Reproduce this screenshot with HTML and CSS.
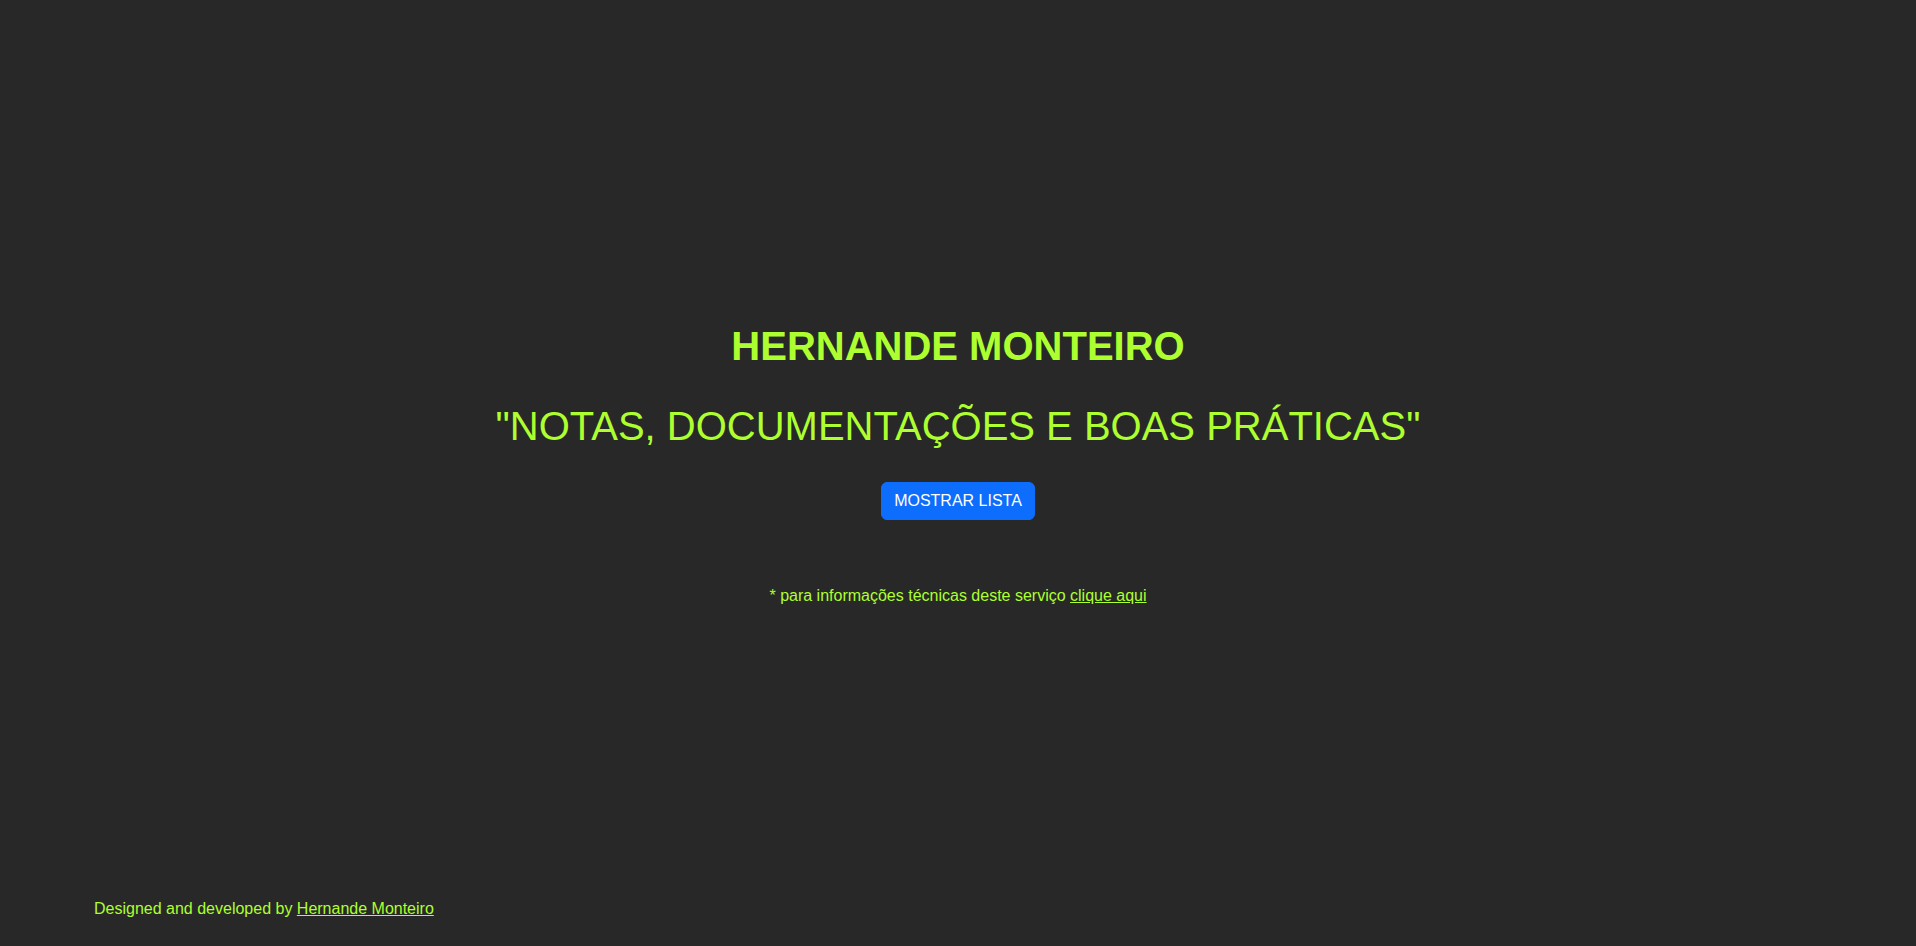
FILE: index.html
```html
<!DOCTYPE html>
<html lang="pt">
<head>
<meta charset="utf-8">
<title>Hernande Monteiro</title>
<link rel="stylesheet" href="styles.css">
</head>
<body>
<div class="page">
  <main class="hero">
    <h1 class="title">HERNANDE MONTEIRO</h1>
    <h2 class="subtitle">"NOTAS, DOCUMENTAÇÕES E BOAS PRÁTICAS"</h2>
    <button class="btn" type="button">MOSTRAR LISTA</button>
    <p class="note">* para informações técnicas deste serviço <a href="#">clique aqui</a></p>
  </main>
  <footer class="footer">
    <p>Designed and developed by <a href="#">Hernande Monteiro</a></p>
  </footer>
</div>
</body>
</html>
```
FILE: styles.css
```css
html, body {
  margin: 0;
  padding: 0;
}
body {
  background: #282828;
  color: #adff2f;
  font-family: "Liberation Sans", Arial, sans-serif;
  font-size: 16px;
  line-height: 1.5;
}
.page {
  min-height: 100vh;
  display: flex;
  flex-direction: column;
}
.hero {
  display: flex;
  flex-direction: column;
  align-items: center;
  padding-top: 323px;
}
.title {
  margin: 0;
  font-size: 40px;
  font-weight: 700;
  line-height: 46px;
}
.subtitle {
  margin: 34px 0 0;
  font-size: 40px;
  font-weight: 400;
  line-height: 46px;
}
.btn {
  margin-top: 33px;
  background: #0d6efd;
  color: #fff;
  border: 1px solid #0d6efd;
  border-radius: 6px;
  padding: 6px 12px;
  font-family: "Liberation Sans", Arial, sans-serif;
  font-size: 16px;
  line-height: 24px;
  cursor: pointer;
}
.note {
  margin: 64px 0 0;
  font-size: 16px;
  line-height: 24px;
}
a {
  color: #adff2f;
  text-decoration: underline;
}
.footer {
  margin-top: auto;
  padding: 0 94px 25px;
}
.footer p {
  margin: 0;
  line-height: 24px;
}
```
